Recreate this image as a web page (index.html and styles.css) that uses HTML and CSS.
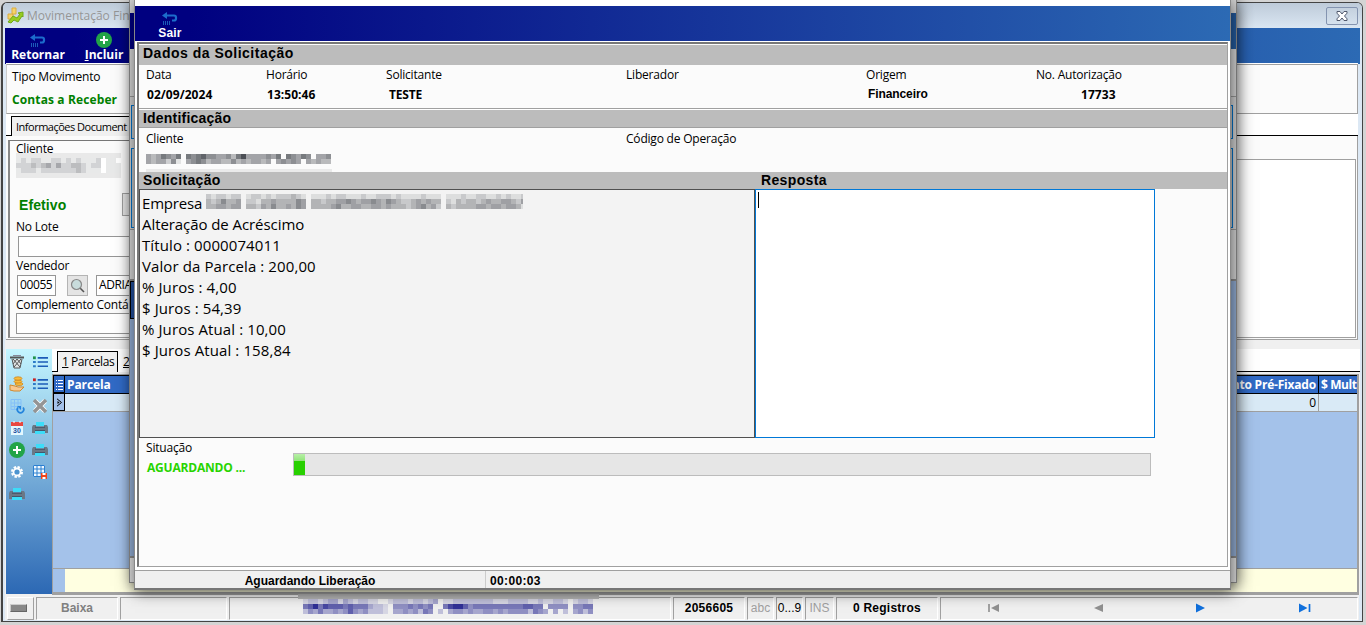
FILE: index.html
```
<!DOCTYPE html>
<html lang="pt-BR">
<head>
    <meta charset="UTF-8">
    <title>Movimentação Financeira</title>
    <link rel="stylesheet" href="styles.css">
</head>
<body>
    <svg class="defs" width="0" height="0">
        <symbol id="back" viewBox="0 0 16 14">
            <path d="M5 0v7L0 3.500z" fill="#1c6ccc"/>
            <path d="M3 3.500h9q2 0 2 2v1q0 2-2 2h-2" fill="none" stroke="#1c6ccc" stroke-width="2.200"/>
            <path d="M1.500 9v4M3.500 9v4M5.500 9v4M7.500 9v4" stroke="#1c5cb8"/>
        </symbol>
        <symbol id="plus" viewBox="0 0 16 16">
            <circle cx="8" cy="8" r="8" fill="#22a447"/>
            <path d="M8 4v8M4 8h8" stroke="#fff" stroke-width="2"/>
        </symbol>
        <symbol id="printer" viewBox="0 0 16 16">
            <path d="M4 2h8v4H4z" fill="#3cdcf8"/>
            <path d="M1 5h3v2h8V5h3l1 2v6H0V7z" fill="#6a7886"/>
            <path d="M3 6.500h10v1.500H3z" fill="#4c5c6c"/>
            <path d="M3 10h10v4H3z" fill="#3cdcf8"/>
            <path d="M3 10h10v1H3z" fill="#44586c"/>
        </symbol>
        <symbol id="list" viewBox="0 0 16 12">
            <path d="M5 1.500h11M5 6h11M5 10.500h11" stroke="#1c5cb8" stroke-width="1.800"/>
            <path d="M0 6h3M0 10.500h3" stroke="#2c7cc8" stroke-width="2"/>
            <path d="M0 1.500h3" stroke="currentColor" stroke-width="3"/>
        </symbol>
    </svg>

    <div class="window main">
        <div class="titlebar">
            <svg class="app-icon" width="17" height="17" viewBox="0 0 17 17">
                <path d="M5 1h4v6H5zM1 7h5v5H1z" fill="#f4d468" stroke="#dcac40"/>
                <path d="M1 15l5-6 4 2 3-4-2-1 5-1v5l-1-1-4 6-4-2-3 3z" fill="#98cc20" stroke="#70a818"/>
            </svg>
            <span class="caption">Movimentação Fina</span>
            <span class="close">
                <svg width="12" height="10" viewBox="0 0 12 10">
                    <path d="M1 .5h3l2 2.500L8 .5h3v1.700L8.500 5 11 7.800v1.700H8L6 7 4 9.500H1V7.800L3.500 5 1 2.200z" fill="#fff" stroke="#50586c"/>
                </svg>
            </span>
        </div>
        <div class="toolbar">
            <div class="tool"><svg width="16" height="14"><use href="#back"/></svg><b>Retornar</b></div>
            <div class="tool tool-add"><svg width="16" height="16"><use href="#plus"/></svg><b><u>I</u>ncluir</b></div>
        </div>
        <div class="movement">
            <div class="label">Tipo Movimento</div>
            <div class="movement-name">Contas a Receber</div>
        </div>
        <div class="tabs">
            <div class="tab">Informações Document</div>
        </div>
        <div class="tab-page">
            <div class="document">
                <div class="label">Cliente</div>
                <div class="client-strip"><div class="mosaic" data-rows="12122112212121112.11|22232342422332122.111|12221222222232111.111"></div></div>
                <div class="payment"><span>Efetivo</span><i></i></div>
                <div class="label">No Lote</div>
                <div class="input lote"></div>
                <div class="label seller-label">Vendedor</div>
                <div class="seller">
                    <div class="input code">00055</div>
                    <div class="search">
                        <svg width="16" height="16" viewBox="0 0 16 16"><path d="M10 10l4 4" stroke="#555" stroke-width="1.600"/><circle cx="6.500" cy="6.500" r="5" fill="#c8dcdc" stroke="#888" stroke-width="1.200"/></svg>
                    </div>
                    <div class="input name">ADRIA</div>
                </div>
                <div class="label">Complemento Contá</div>
                <div class="input complement"></div>
            </div>
            <div class="document-side"></div>
        </div>
        <div class="lower">
            <div class="sidebar">
                <svg width="16" height="16" viewBox="0 0 16 16"><path d="M1 3.500h14" stroke="#555" stroke-width="2"/><path d="M3 5l2 9h6l2-9" fill="#e0e4e4" stroke="#555"/><path d="M4 5l7 8M8 5l4 5M12 5l-7 8M8 5l-4 5" stroke="#555"/><path d="M4 1.500h8" stroke="#889"/></svg>
                <svg width="15" height="12" color="#20944c"><use href="#list"/></svg>
                <svg width="17" height="16" viewBox="0 0 17 16"><path d="M1 9l5 1 3 1h6l-4 4H5l-4-1z" fill="#f8c890" stroke="#d08830"/><g fill="#f8bc3c" stroke="#c87c18" stroke-width=".7"><ellipse cx="10" cy="8" rx="4" ry="1.500"/><ellipse cx="9" cy="5.500" rx="4" ry="1.500"/><ellipse cx="9" cy="2.500" rx="4" ry="1.700"/></g></svg>
                <svg width="15" height="12" color="#c82020"><use href="#list"/></svg>
                <svg width="16" height="16" viewBox="0 0 16 16"><path d="M2 1.500h10v10H2zM2 5h10M2 8.500h10M5.500 1.500v10M9 1.500v10" fill="none" stroke="#84c0f8"/><path d="M9 9.500a3.200 3.200 0 1 0 5 0" fill="none" stroke="#2484dc" stroke-width="1.700"/><path d="M8 8h4v4z" fill="#2484dc"/></svg>
                <svg width="14" height="14" viewBox="0 0 14 14"><path d="M2 2l10 10M12 2L2 12" stroke="#fff" stroke-width="5"/><path d="M1 1l12 12M13 1L1 13" stroke="#949494" stroke-width="3.500"/></svg>
                <svg width="14" height="14" viewBox="0 0 14 14"><path d="M1 3h12v11H1z" fill="#e4f8ff"/><path d="M1 1h12v4H1z" fill="#e84840"/><path d="M4 0v2M10 0v2" stroke="#fff"/><text class="day" x="7" y="12" text-anchor="middle">30</text></svg>
                <svg width="16" height="16"><use href="#printer"/></svg>
                <svg width="16" height="16"><use href="#plus"/></svg>
                <svg width="16" height="16"><use href="#printer"/></svg>
                <svg width="14" height="14" viewBox="0 0 14 14"><circle cx="7" cy="7" r="5" fill="none" stroke="#fff" stroke-width="2" stroke-dasharray="2.400 1.520"/><circle cx="7" cy="7" r="3.500" fill="#4c94d0" stroke="#fff" stroke-width="1.800"/></svg>
                <svg width="16" height="16" viewBox="0 0 16 16"><path d="M1 1h12v12H1z" fill="#eef8ff"/><path d="M1.500 1.500h11v11h-11zM1 5h12M1 9h12M5 1v12M9 1v12" fill="none" stroke="#2c80d0"/><path d="M9 9h6v6H9z" fill="#f04418"/><path d="M10.500 9h3v2h-3zM10.500 13h3v2h-3z" fill="#fff"/></svg>
                <svg width="16" height="16"><use href="#printer"/></svg>
            </div>
            <div class="parcels">
                <div class="parcel-tabs">
                    <div class="tab"><u>1</u> Parcelas</div>
                    <div class="tab next"><u>2</u></div>
                </div>
                <div class="grid">
                    <div class="grid-head">
                        <span class="marker"><svg width="9" height="11" viewBox="0 0 9 11"><path d="M1 1.500h1M3 1.500h5M1 4.500h1M3 4.500h5M1 7.500h1M3 7.500h5M1 10.500h1M3 10.500h5" stroke="#fff"/></svg></span>
                        <b>Parcela</b><b class="prefixed">nto Pré-Fixado</b><b class="fine">$ Mult.</b>
                    </div>
                    <div class="grid-row">
                        <span class="marker"><svg width="7" height="9" viewBox="0 0 7 9"><path d="M1 .8l4.500 3.700L1 8.200" fill="none" stroke="#000"/><path d="M1.500 3l2 1.500-2 1.500z"/></svg></span>
                        <span></span><span class="prefixed">0</span><span class="fine"></span>
                    </div>
                    <div class="grid-foot"></div>
                </div>
            </div>
        </div>
        <div class="statusbar">
            <div class="cell key"><i></i></div>
            <div class="cell baixa">Baixa</div>
            <div class="cell"></div>
            <div class="cell company"><div class="company-strip"><div class="mosaic blue" data-rows="122123313212211..1222122123.1122222222111222211211221.122121|56857666565553221.44454545..57886455555555556655.4444.44554444|24353343464342221.33434254.2.34434334434344442543.3.2.342433"></div></div></div>
            <div class="cell strong">2056605</div>
            <div class="cell off">abc</div>
            <div class="cell">0...9</div>
            <div class="cell off">INS</div>
            <div class="cell strong">0 Registros</div>
            <div class="cell nav">
                <svg width="12" height="10" viewBox="0 0 12 10"><path d="M1 1v8" stroke="#888" stroke-width="1.500"/><path d="M11 1v8L3 5z" fill="#909090"/></svg>
                <svg width="9" height="10" viewBox="0 0 9 10"><path d="M9 1v8L0 5z" fill="#909090"/></svg>
                <svg width="9" height="10" viewBox="0 0 9 10"><path d="M0 .5v9L9 5z" fill="#1070dc"/></svg>
                <svg width="12" height="10" viewBox="0 0 12 10"><path d="M0 .5v9L8.500 5z" fill="#1070dc"/><path d="M10.500 1v8" stroke="#1070dc" stroke-width="1.700"/></svg>
            </div>
        </div>
    </div>

    <div class="window middle">
        <div class="middle-bar"></div>
        <div class="middle-top"></div>
        <div class="middle-fields">
            <div class="middle-field"></div>
            <div class="middle-field tall"></div>
        </div>
        <div class="middle-gap"></div>
        <div class="middle-head"></div>
        <div class="middle-grid"></div>
        <div class="middle-foot"></div>
    </div>

    <div class="window dialog">
        <div class="toolbar">
            <div class="tool"><svg width="16" height="14"><use href="#back"/></svg><b>Sair</b></div>
        </div>
        <div class="request">
            <h2 class="first">Dados da Solicitação</h2>
            <div class="fields data">
                <div><label>Data</label><b>02/09/2024</b></div>
                <div><label>Horário</label><b>13:50:46</b></div>
                <div><label>Solicitante</label><b class="user">TESTE</b></div>
                <div><label>Liberador</label></div>
                <div><label>Origem</label><b class="origin">Financeiro</b></div>
                <div><label>No. Autorização</label><b class="number">17733</b></div>
            </div>
            <h2 class="second">Identificação</h2>
            <div class="fields client">
                <div><label>Cliente</label><div class="mosaic" data-rows="4346546.6567554453684444546.65465.445444|434425a.45653443353434434.45454.434334"></div><i></i></div>
                <div><label>Código de Operação</label></div>
            </div>
            <div class="heads"><h2>Solicitação</h2><h2>Resposta</h2></div>
            <div class="memos">
                <div class="memo">
                    <div class="company-line">Empresa <span class="mosaic" data-rows="2122122.122121222321.11121221112112221211112111.1112112211212112|3235334.221334333354.33233445434454354322343433.2132332343344324|3344344.332435334354.33334533443344343332345342.3233334434434431"></span></div>
                    <div class="subject">Alteração de Acréscimo</div>
                    <div>Título : 0000074011</div>
                    <div>Valor da Parcela : 200,00</div>
                    <div>% Juros : 4,00</div>
                    <div>$ Juros : 54,39</div>
                    <div>% Juros Atual : 10,00</div>
                    <div>$ Juros Atual : 158,84</div>
                </div>
                <div class="answer"><i></i></div>
            </div>
            <div class="situation">
                <div><label>Situação</label><b>AGUARDANDO ...</b></div>
                <div class="progress"><i></i></div>
            </div>
        </div>
        <div class="dialog-status">
            <div>Aguardando Liberação</div>
            <div>00:00:03</div>
        </div>
    </div>
    <script src="script.js"></script>
</body>
</html>
```
FILE: script.js
```
// fills the hidden names with 5px blocks, one digit per block
document.querySelectorAll(".mosaic").forEach(function (box) {
    box.dataset.rows.split("|").forEach(function (row) {
        const line = document.createElement("span");
        line.className = "mosaic-row";
        for (const digit of row) {
            const block = document.createElement("i");
            block.style.opacity = digit === "." ? 0 : digit === "a" ? 0.1 : digit / 10;
            line.appendChild(block);
        }
        box.appendChild(line);
    });
});
```
FILE: styles.css
```
* {
    box-sizing: border-box;
}
body {
    margin: 0;
    width: 1366px;
    height: 625px;
    overflow: hidden;
    position: relative;
    background: #d4d4d4;
    font-family: "Open Sans", "Noto Sans", sans-serif;
    font-size: 12px;
    line-height: 16px;
    color: #000;
}
.defs {
    position: absolute;
}
.window {
    position: absolute;
    display: flex;
    flex-direction: column;
}
svg {
    display: block;
    flex: none;
}
.label, label {
    display: block;
    white-space: nowrap;
    letter-spacing: -0.2px;
}

/* mosaic */
.mosaic {
    display: inline-block;
    overflow: hidden;
}
.mosaic-row {
    display: flex;
    height: 5px;
}
.mosaic-row i {
    width: 5px;
    height: 5px;
    flex: none;
    background: #20242c;
}
.blue .mosaic-row i {
    background: #000080;
}

/* main window */
.main {
    left: 1px;
    top: 2px;
    width: 1362px;
    height: 620px;
    border: 1px solid #444;
    border-width: 1px 1px 1px 2px;
    border-radius: 6px 6px 0 0;
    background: #dce8f4;
    padding: 0 2px;
    overflow: hidden;
}
.titlebar {
    height: 25px;
    flex: none;
    display: flex;
    align-items: center;
    margin: 0 -2px;
    padding-left: 4px;
    background: linear-gradient(#becbd9, #dae6f2);
}
.caption {
    flex: 1;
    margin-left: 3px;
    color: #969696;
    font-size: 12px;
    white-space: nowrap;
}
.close {
    width: 32px;
    height: 18px;
    margin-right: 4px;
    border: 1px solid #8494b0;
    border-radius: 2px;
    display: flex;
    align-items: center;
    justify-content: center;
}
.toolbar {
    display: flex;
    flex: none;
    background: linear-gradient(90deg, #000080 0%, #000080 5%, #2c6ab4);
    color: #fff;
}
.main .toolbar {
    height: 36px;
    padding-left: 3px;
}
.tool {
    display: flex;
    flex-direction: column;
    align-items: center;
    width: 60px;
    padding-top: 6px;
}
.tool b {
    line-height: 14px;
}
.tool-add {
    margin-left: 6px;
    padding-top: 4px;
}
.movement {
    height: 50px;
    flex: none;
    margin: 0 2px 0 1px;
    border: 1px solid #a0a0a0;
    border-left-color: #ccc;
    box-shadow: 0 -1px #fff;
    background: #fbfbfb;
    padding: 4px 5px;
}
.movement-name {
    margin-top: 7px;
    font-weight: bold;
    color: #008000;
    letter-spacing: 0.12px;
}
.tabs {
    height: 22px;
    flex: none;
    margin: 0 2px 0 1px;
    padding: 2px 0 0 5px;
    background: #fff;
    border-bottom: 1px solid #000;
}
.tab {
    height: 20px;
    width: 400px;
    border: 1px solid #000;
    border-bottom: 0;
    background: #f0f0f0;
    padding: 2px 4px;
    white-space: nowrap;
    letter-spacing: -0.45px;
}
.tabs .tab {
    padding-left: 4px;
    font-size: 11px;
    letter-spacing: -0.5px;
}
.tab-page {
    height: 204px;
    flex: none;
    margin: 0 2px 0 1px;
    padding: 4px 1px 1px 2px;
    border-right: 1px solid #a0a0a0;
    border-bottom: 1px solid #a0a0a0;
    background: #fbfbfb;
    display: flex;
}
.document {
    width: 900px;
    border-top: 1px solid #777;
    border-left: 2px solid #888;
    border-bottom: 1px solid #a0a0a0;
    padding-left: 6px;
}
.document-side {
    flex: 1;
    margin-top: 19px;
    border: 1px solid #a0a0a0;
    background: #fff;
}
.client-strip {
    width: 105px;
    height: 25px;
    margin-top: -4px;
    padding-top: 5px;
    background: #e9e9e9;
}
.client-strip .mosaic {
    background: #fff;
    display: block;
}
.payment {
    display: flex;
    height: 41px;
    padding: 15px 0 0 3px;
    font-family: "Liberation Sans", Arial, sans-serif;
    font-size: 14px;
    font-weight: bold;
    color: #008000;
    letter-spacing: 0.1px;
    line-height: 25px;
}
.payment span {
    width: 103px;
}
.payment i {
    width: 80px;
    height: 23px;
    border: 1px solid #a0a0a0;
    background: #e8e8e8;
}
.input {
    height: 21px;
    border: 1px solid #969696;
    background: #fff;
    padding: 1px 2px;
    letter-spacing: -0.4px;
}
.lote {
    margin: 1px 0 0 2px;
}
.seller-label {
    margin-top: 1px;
}
.seller {
    display: flex;
    padding: 1px 0 0 1px;
    height: 23px;
}
.code {
    width: 39px;
}
.search {
    width: 21px;
    height: 21px;
    margin: 0 8px 0 11px;
    background: #e4e4e4;
    border: 1px solid #b4b4b4;
    display: flex;
    align-items: center;
    justify-content: center;
}
.name {
    flex: 1;
}
.lower {
    display: flex;
    flex: none;
    height: 255px;
    padding-top: 9px;
    background: #f0f0f0;
}
.sidebar {
    width: 47px;
    height: 245px;
    padding-top: 2px;
    display: grid;
    grid-template-columns: 22px 24px;
    grid-auto-rows: 22px;
    place-items: center;
    align-content: start;
    background: linear-gradient(#c4f5ff, #2c68b4);
    margin-left: 1px;
}
.day {
    font: bold 7px "Liberation Sans", Arial, sans-serif;
    fill: #1c50a0;
}
.parcels {
    flex: 1;
    display: flex;
    flex-direction: column;
    height: 246px;
    margin-left: -1px;
}
.parcel-tabs {
    display: flex;
    flex: none;
    height: 23px;
    padding: 2px 0 0 5px;
    background: #fff;
    border-bottom: 1px solid #000;
}
.parcel-tabs .tab {
    width: 61px;
    height: 21px;
}
.parcel-tabs .next {
    background: #fff;
    border-color: transparent;
}
.grid {
    flex: 1;
    margin: 2px 1px 0 0;
    display: flex;
    flex-direction: column;
    background: #a4c2ea;
    border: 1px solid #a0a0a0;
    border-width: 1px 2px 3px 1px;
}
.grid-head, .grid-row {
    display: flex;
    height: 19px;
    line-height: 18px;
    white-space: nowrap;
    overflow: hidden;
    border-bottom: 1px solid #000;
}
.grid-head {
    background: #316ac5;
    color: #fff;
    border-top: 1px solid #000;
}
.grid-row {
    height: 18px;
    background: #d9eaf6;
    border-color: #a0a0a0;
}
.marker {
    width: 12px;
    flex: none;
    border: 1px solid #000;
    border-width: 0 1px 1px 1px;
    display: flex;
    align-items: center;
    justify-content: center;
}
.grid-row .marker {
    background: #a4c2ea;
}
.marker + * {
    flex: 1;
    padding-left: 2px;
    letter-spacing: -0.1px;
}
.prefixed {
    width: 140px;
    text-align: right;
    padding-right: 2px;
    letter-spacing: -0.2px;
}
.fine {
    width: 39px;
    padding-left: 2px;
    border-left: 1px solid #000;
    letter-spacing: -0.4px;
}
.grid-row .fine {
    border-color: #a0a0a0;
}
.grid-foot {
    height: 24px;
    margin-top: auto;
    border-top: 1px solid #a0a0a0;
    background: linear-gradient(90deg, #a4c2ea 12px, #ffffe1 12px);
}
.statusbar {
    height: 25px;
    flex: none;
    padding: 2px 1px 1px 2px;
    display: grid;
    grid-template-columns: 27px 82px 107px 442px 72px 27px 27px 29px 102px 1fr;
    column-gap: 2px;
    background: #f0f0f0;
    margin-right: 1px;
}
.cell {
    border: 1px solid #a0a0a0;
    border-right-color: #fff;
    border-bottom-color: #fff;
    font-family: "Liberation Sans", Arial, sans-serif;
    line-height: 21px;
    text-align: center;
}
.baixa {
    font-weight: bold;
    color: #808080;
}
.strong {
    font-weight: bold;
    letter-spacing: 0.25px;
}
.off {
    color: #a0a0a0;
}
.key {
    border-color: #fff #a0a0a0 #a0a0a0 #fff;
    padding: 6px 2px;
}
.key i {
    display: block;
    width: 17px;
    height: 8px;
    background: #888;
    border: 1px solid #666;
    border-top-color: #ccc;
    border-left-color: #ccc;
}
.company-strip {
    width: 301px;
    height: 25px;
    margin: -4px 0 0 68px;
    padding: 0 5px;
    background: #f0f0f0;
    border-top: 5px solid #b6b6b6;
    text-align: left;
}
.company-strip .mosaic {
    display: block;
    width: 290px;
}
.nav {
    display: flex;
    align-items: center;
    justify-content: space-between;
    padding: 0 46px 1px 47px;
}

/* window behind the dialog */
.middle {
    left: 129px;
    top: 0;
    width: 1108px;
    height: 583px;
    background: #90aad0;
    border: 1px solid #888;
    border-top: 0;
    box-shadow: 2px 3px 14px rgba(0, 0, 0, 0.5);
}
.middle-bar {
    height: 49px;
    flex: none;
    border-top: 13px solid #d4d4d4;
    background: linear-gradient(90deg, #000080 20%, #245a9c);
}
.middle-top {
    height: 48px;
    flex: none;
    background: #d4d4d4;
    border-bottom: 1px solid #969696;
}
.middle-fields {
    height: 132px;
    flex: none;
    padding: 8px 3px 0 1px;
    background: #d0d0d0;
}
.middle-field {
    height: 34px;
    border: 1px solid #0070c8;
    background: #c4c4c4;
}
.middle-field.tall {
    margin-top: 9px;
    height: 80px;
}
.middle-gap {
    height: 52px;
    flex: none;
    background: #d4d4d4;
    border-top: 1px solid #969696;
    border-bottom: 2px solid #888;
}
.middle-head {
    height: 38px;
    flex: none;
    margin-right: 20px;
    background: #24509c;
    border: 1px solid #000;
}
.middle-grid {
    flex: 1;
}
.middle-foot {
    height: 26px;
    flex: none;
    background: #dcdcdc;
    border-top: 2px solid #888;
}

/* dialog */
.dialog {
    left: 134px;
    top: 0;
    width: 1097px;
    height: 590px;
    padding-top: 6px;
    background: #fff;
    border: 1px solid #888;
    border-top: 0;
    border-bottom: 2px solid #777;
    box-shadow: 1px 2px 14px rgba(0, 0, 0, 0.55);
}
.dialog .toolbar {
    height: 35px;
    padding-left: 5px;
}
.dialog .tool b {
    font: bold 12px/14px "Liberation Sans", Arial, sans-serif;
    letter-spacing: 0.2px;
}
.request {
    height: 525px;
    flex: none;
    margin: 1px 2px 0;
    border: 1px solid #a0a0a0;
    border-top: 2px solid #777;
    border-left: 2px solid #777;
    padding-top: 1px;
    background: #fbfbfb;
}
h2 {
    margin: 0;
    height: 17px;
    padding-left: 4px;
    background: #bcbcbc;
    font: bold 14px/17px "Liberation Sans", Arial, sans-serif;
    letter-spacing: 0.35px;
}
h2.first {
    height: 20px;
    line-height: 17px;
    letter-spacing: 0.5px;
}
h2.second {
    letter-spacing: 0.2px;
}
.fields {
    display: grid;
    padding-left: 7px;
}
.fields b {
    display: block;
    padding-left: 1px;
    margin-top: 4px;
    letter-spacing: 0.05px;
}
.data {
    height: 45px;
    padding-top: 2px;
    grid-template-columns: 120px 120px 240px 240px 170px 1fr;
    border-bottom: 1px solid #fff;
    box-shadow: inset 0 -1px #a0a0a0;
}
.fields .user {
    padding-left: 3px;
    letter-spacing: -0.2px;
}
.fields .origin {
    font: bold 12px/14px "Liberation Sans", Arial, sans-serif;
    letter-spacing: -0.1px;
    padding-left: 2px;
}
.fields .number {
    padding-left: 45px;
}
.client {
    height: 45px;
    padding-top: 3px;
    grid-template-columns: 480px 1fr;
    border-top: 1px solid #a0a0a0;
}
.client .mosaic {
    display: block;
    width: 185px;
    margin-top: 7px;
}
.client > div > i {
    display: block;
    width: 186px;
    height: 4px;
    margin-top: 5px;
    background: #eaeaea;
}
.heads {
    display: grid;
    grid-template-columns: 618px 1fr;
}
.memos {
    display: flex;
    height: 249px;
}
.memo {
    width: 616px;
    border: 1px solid #505050;
    background: #f3f3f3;
    padding: 3px 2px;
    font-size: 15px;
    line-height: 21px;
    letter-spacing: 0.1px;
    white-space: nowrap;
}
.subject {
    letter-spacing: -0.07px;
}
.company-line {
    display: flex;
    height: 21px;
    letter-spacing: -0.2px;
}
.company-line .mosaic {
    width: 317px;
    height: 15px;
    margin: 1px 0 0 4px;
}
.answer {
    width: 400px;
    border: 1px solid #0078d7;
    background: #fff;
    padding: 2px;
}
.answer i {
    display: block;
    width: 1px;
    height: 16px;
    background: #000;
}
.situation {
    display: flex;
    padding: 2px 0 0 7px;
}
.situation > div:first-child {
    width: 147px;
}
.situation b {
    display: block;
    margin-top: 4px;
    padding-left: 1px;
    color: #28d400;
    letter-spacing: -0.2px;
}
.progress {
    width: 858px;
    height: 23px;
    margin-top: 13px;
    border: 1px solid #bcbcbc;
    background: #e6e6e6;
}
.progress i {
    display: block;
    width: 11px;
    height: 21px;
    background: linear-gradient(#b8f0a8, #90e478 33%, #28d000 34%);
}
.dialog-status {
    display: grid;
    grid-template-columns: 351px 1fr;
    height: 18px;
    margin-top: 3px;
    border-top: 1px solid #a0a0a0;
    background: #f0f0f0;
    font: bold 12px/20px "Liberation Sans", Arial, sans-serif;
}
.dialog-status div {
    height: 17px;
}
.dialog-status div:first-child {
    text-align: center;
    border-right: 1px solid #ccc;
}
.dialog-status div:last-child {
    padding-left: 4px;
    letter-spacing: 0.35px;
}
```
